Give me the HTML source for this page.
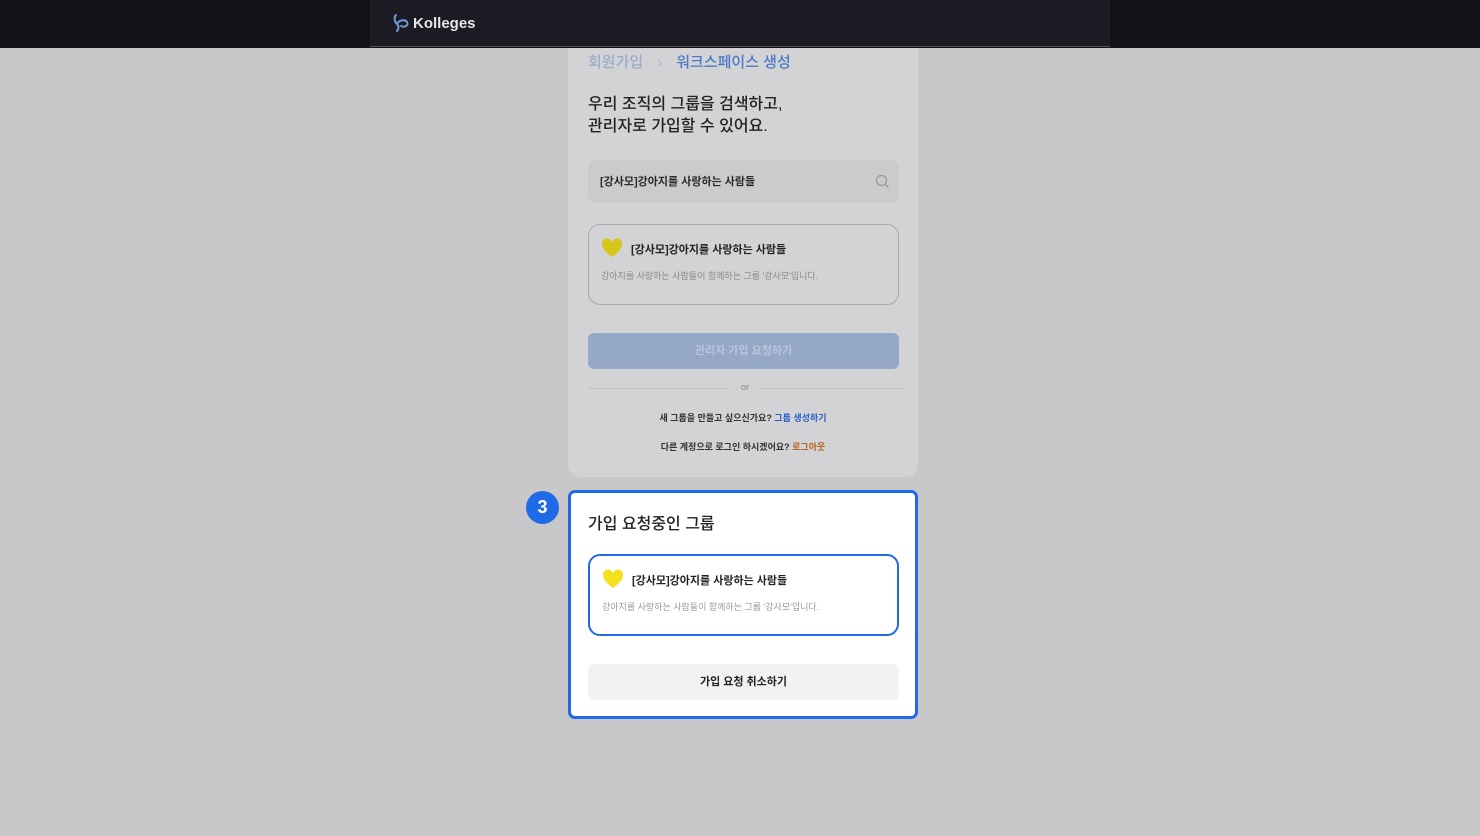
<!DOCTYPE html>
<html><head><meta charset="utf-8"><style>
*{margin:0;padding:0;box-sizing:border-box}
body{width:1480px;height:836px;background:#c8c8ca;font-family:"Liberation Sans","Noto Sans CJK KR",sans-serif;position:relative;overflow:hidden;color:#1a1a1a}
.top{position:absolute;left:0;top:0;width:1480px;height:48px;background:#131117}
.hdr{position:absolute;left:370px;top:0;width:740px;height:47px;background:#1c1a22;border-bottom:1px solid #55535a}
.logo{position:absolute;left:22px;top:13px;display:flex;align-items:center;color:#e6e6e8;font-weight:bold;font-size:15px}
.card{position:absolute;left:568px;top:48px;width:350px;height:429px;background:#d3d3d5;border-radius:0 0 12px 12px}
.abs{position:absolute}
.bc{left:20px;top:3px;font-size:15px;font-weight:500}
.title{left:20px;top:46px;font-size:16px;line-height:22px;font-weight:500;color:#222}
.search{left:20px;top:112px;width:311px;height:43px;background:#cbcbcd;border-radius:8px;font-size:11px;font-weight:bold;padding:13px 12px;color:#2a2a2a}
.item{left:20px;top:176px;width:311px;height:81px;border:1px solid #a9a9ab;border-radius:12px}
.it{position:absolute;left:42px;top:16px;font-size:11px;font-weight:bold;color:#222}
.id{position:absolute;left:12px;top:44px;font-size:9px;color:#8a8a8c}
.heart{position:absolute;left:12px;top:13px}
.btn{left:20px;top:285px;width:311px;height:36px;background:#95a8c8;border-radius:6px;color:#b8c5dc;font-size:11px;font-weight:bold;text-align:center;line-height:36px}
.or{left:20px;top:334px;width:314px;height:14px;font-size:9px;color:#888;text-align:center}
.line{position:absolute;top:6px;height:1px;background:#c1c1c3;width:140px}
.t1{left:0;top:363px;width:350px;text-align:center;font-size:9px;font-weight:bold;color:#333}
.modal{position:absolute;left:568px;top:490px;width:350px;height:229px;background:#fff;border:3px solid #1f6ae6;border-radius:7px}
.num{position:absolute;left:526px;top:491px;width:33px;height:33px;border-radius:50%;background:#1f6ae6;color:#fff;font-weight:bold;font-size:18px;text-align:center;line-height:33px}
</style></head><body>
<div class="top"></div>
<div class="hdr"><div class="logo"><svg width="18" height="20" viewBox="0 0 18 20"><path d="M4 2c-2 2-2 6 1 9 2 2 2 5 0 7M5 11c2-4 8-5 10-2 2 3-2 6-6 4" fill="none" stroke="#6f9ad6" stroke-width="2" stroke-linecap="round"/></svg><span style="margin-left:3px">Kolleges</span></div></div>
<div class="card">
 <div class="abs bc"><span style="color:#98acca">회원가입</span><span style="color:#a8b4c8;margin:0 14px;font-weight:normal">›</span><span style="color:#4a7ac8">워크스페이스 생성</span></div>
 <div class="abs title">우리 조직의 그룹을 검색하고,<br>관리자로 가입할 수 있어요.</div>
 <div class="abs search">[강사모]강아지를 사랑하는 사람들<svg style="position:absolute;right:9px;top:14px" width="15" height="15" viewBox="0 0 15 15"><circle cx="6.5" cy="6.5" r="5" fill="none" stroke="#999" stroke-width="1.3"/><path d="M10 10l3.5 3.5" stroke="#999" stroke-width="1.3"/></svg></div>
 <div class="abs item"><svg class="heart" width="22" height="20" viewBox="0 0 22 20"><path d="M11 19C4 14 1 10 1 6a5 5 0 0 1 10-1 5 5 0 0 1 10 1c0 4-3 8-10 13z" fill="#d8c51a"/></svg><div class="it">[강사모]강아지를 사랑하는 사람들</div><div class="id">강아지를 사랑하는 사람들이 함께하는 그룹 '강사모'입니다.</div></div>
 <div class="abs btn">관리자 가입 요청하기</div>
 <div class="abs or"><div class="line" style="left:0"></div>or<div class="line" style="right:0"></div></div>
 <div class="abs t1">새 그룹을 만들고 싶으신가요? <span style="color:#2c5fc4">그룹 생성하기</span></div>
 <div class="abs t1" style="top:392px">다른 계정으로 로그인 하시겠어요? <span style="color:#b5641e">로그아웃</span></div>
</div>
<div class="num">3</div>
<div class="modal">
 <div class="abs" style="left:17px;top:17px;font-size:16px;font-weight:500;color:#222">가입 요청중인 그룹</div>
 <div class="abs" style="left:17px;top:61px;width:311px;height:82px;border:2px solid #1f6ae6;border-radius:12px">
  <svg class="heart" width="22" height="20" viewBox="0 0 22 20"><path d="M11 19C4 14 1 10 1 6a5 5 0 0 1 10-1 5 5 0 0 1 10 1c0 4-3 8-10 13z" fill="#f5e11b"/></svg>
  <div class="it">[강사모]강아지를 사랑하는 사람들</div><div class="id" style="color:#999">강아지를 사랑하는 사람들이 함께하는 그룹 '강사모'입니다.</div></div>
 <div class="abs" style="left:17px;top:171px;width:311px;height:36px;background:#f1f2f4;border-radius:6px;text-align:center;line-height:36px;font-size:11px;font-weight:bold;color:#222">가입 요청 취소하기</div>
</div>
</body></html>
